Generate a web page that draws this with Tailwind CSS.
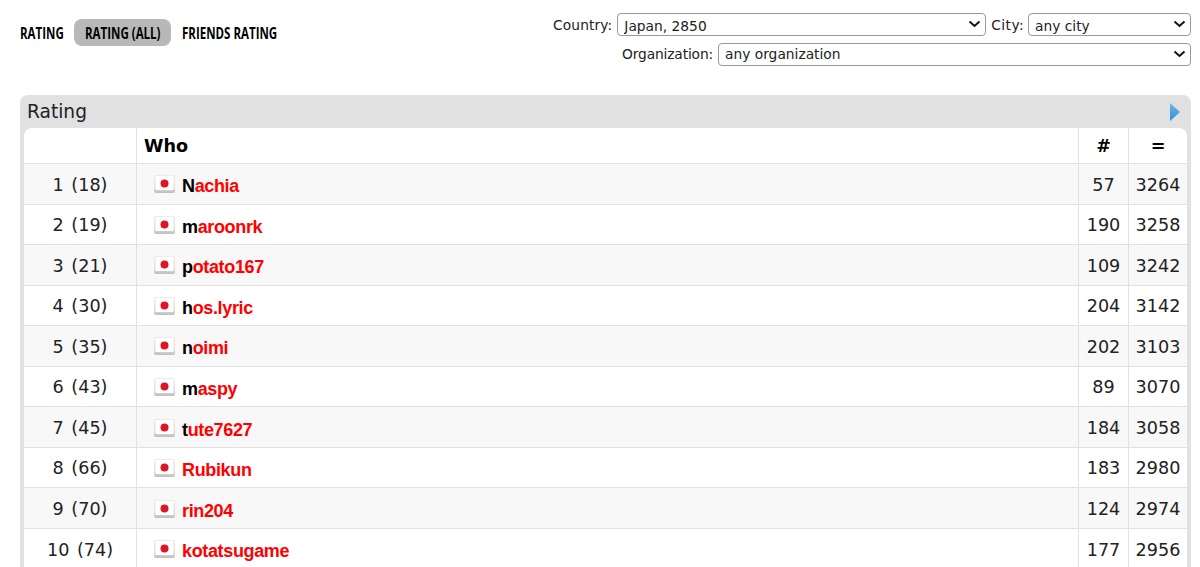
<!DOCTYPE html>
<html lang="en">
<head>
  <meta charset="UTF-8">
  <title>Rating</title>
  <script src="https://cdn.jsdelivr.net/npm/@tailwindcss/browser@4"></script>
</head>
<body class="bg-white h-[567px] overflow-hidden font-['DejaVu_Sans',sans-serif] text-[#222]">
  <div class="flex justify-between h-[95px] pl-5 pr-[9px]">
    <nav class="flex items-start pt-[19px] font-['Open_Sans',sans-serif] font-bold text-[16px] text-black">
      <a class="h-[27px] leading-[29px] w-[54px] scale-x-[0.72] origin-left whitespace-nowrap">RATING</a>
      <a class="h-[27px] leading-[29px] w-[97px] rounded-lg bg-[#b8b8b8] pl-[11px] whitespace-nowrap"><span class="inline-block scale-x-[0.72] origin-left">RATING (ALL)</span></a>
      <a class="h-[27px] leading-[29px] ml-[11px] scale-x-[0.72] origin-left whitespace-nowrap">FRIENDS RATING</a>
    </nav>
    <form class="flex flex-col items-end gap-[7px] pt-[13px] text-[13.8px]">
      <div class="flex items-center">
        <label class="mr-[5px] pt-[2px] tracking-[0.1px]">Country:</label>
        <div class="relative mr-[5px]">
          <select class="appearance-none block w-[369px] h-[23px] border border-[#999] rounded-[4px] pl-[6px] pt-[2px] bg-white"><option>Japan, 2850</option></select>
          <svg class="absolute right-[5px] top-[7px]" width="13" height="8" viewBox="0 0 13 8"><path d="M1.5 1.5 L6.5 6 L11.5 1.5" fill="none" stroke="#111" stroke-width="2"/></svg>
        </div>
        <label class="mr-[4px] pt-[2px] tracking-[0.4px]">City:</label>
        <div class="relative">
          <select class="appearance-none block w-[163px] h-[23px] border border-[#999] rounded-[4px] pl-[6px] pt-[2px] bg-white"><option>any city</option></select>
          <svg class="absolute right-[5px] top-[7px]" width="13" height="8" viewBox="0 0 13 8"><path d="M1.5 1.5 L6.5 6 L11.5 1.5" fill="none" stroke="#111" stroke-width="2"/></svg>
        </div>
      </div>
      <div class="flex items-center">
        <label class="mr-[5px] tracking-[-0.15px]">Organization:</label>
        <div class="relative">
          <select class="appearance-none block w-[473px] h-[23px] border border-[#999] rounded-[4px] pl-[6px] bg-white"><option>any organization</option></select>
          <svg class="absolute right-[5px] top-[7px]" width="13" height="8" viewBox="0 0 13 8"><path d="M1.5 1.5 L6.5 6 L11.5 1.5" fill="none" stroke="#111" stroke-width="2"/></svg>
        </div>
      </div>
    </form>
  </div>

  <section class="mx-5 w-[1171px] bg-[#e1e1e1] rounded-t-lg px-1">
    <div class="flex items-center justify-between h-[33px] pl-[3px] pr-[7px]">
      <h2 class="text-[18.6px] text-[#222]">Rating</h2>
      <svg width="10" height="18" viewBox="0 0 10 18">
        <defs><linearGradient id="arrow" x1="0" y1="0" x2="0" y2="1"><stop offset="0" stop-color="#6fb9ec"/><stop offset="1" stop-color="#2f8ed8"/></linearGradient></defs>
        <path d="M0 0 L10 9 L0 18 Z" fill="url(#arrow)"/>
      </svg>
    </div>
    <div class="bg-white rounded-t-lg text-[17.6px]">
      <div class="grid grid-cols-[113px_942px_50px_58px] h-[35px] items-center font-bold text-black divide-x divide-[#e1e1e1]">
        <div class="h-full"></div><div class="h-full flex items-center pl-[7px] pt-[1px]">Who</div><div class="h-full flex items-center justify-center pt-[1px]">#</div><div class="h-full flex items-center justify-center pt-[1px]">=</div>
      </div>
      <div id="rows"></div>
    </div>
  </section>
  <script>
    const data = [
      ['1 (18)','N','achia',57,3264],['2 (19)','m','aroonrk',190,3258],['3 (21)','p','otato167',109,3242],
      ['4 (30)','h','os.lyric',204,3142],['5 (35)','n','oimi',202,3103],['6 (43)','m','aspy',89,3070],
      ['7 (45)','t','ute7627',184,3058],['8 (66)','','Rubikun',183,2980],['9 (70)','','rin204',124,2974],
      ['10 (74)','','kotatsugame',177,2956]
    ];
    document.getElementById('rows').innerHTML = data.map(([rank, first, rest, n, score]) => `
      <div class="grid grid-cols-[113px_942px_50px_58px] h-[40.55px] odd:bg-[#f8f8f8] even:bg-white border-t border-[#e1e1e1] items-center divide-x divide-[#e1e1e1]">
        <div class="h-full flex items-center justify-center pt-[2px] [word-spacing:2px]">${rank}</div>
        <div class="h-full flex items-center pl-[17px] gap-[7px]">
          <svg class="mt-[1px]" width="21" height="18" viewBox="0 0 21 18">
            <defs><linearGradient id="flag" x1="0" y1="0" x2="0" y2="1"><stop offset="0" stop-color="#ececec"/><stop offset="0.7" stop-color="#e0e0e0"/><stop offset="1" stop-color="#bdbdbd"/></linearGradient></defs>
            <rect x="0" y="0" width="21" height="18" rx="2" fill="url(#flag)"/>
            <rect x="1.5" y="1" width="18" height="14" fill="#fff"/>
            <circle cx="10.5" cy="8.5" r="4" fill="#dd1524"/>
          </svg>
          <span class="font-['Liberation_Sans',sans-serif] font-bold text-[18px] tracking-[-0.35px] text-[#f00] pt-[6px]"><span class="text-black">${first}</span>${rest}</span>
        </div>
        <div class="h-full flex items-center justify-center pt-[2px]">${n}</div>
        <div class="h-full flex items-center justify-center pt-[2px]">${score}</div>
      </div>`).join('');
  </script>
</body>
</html>
